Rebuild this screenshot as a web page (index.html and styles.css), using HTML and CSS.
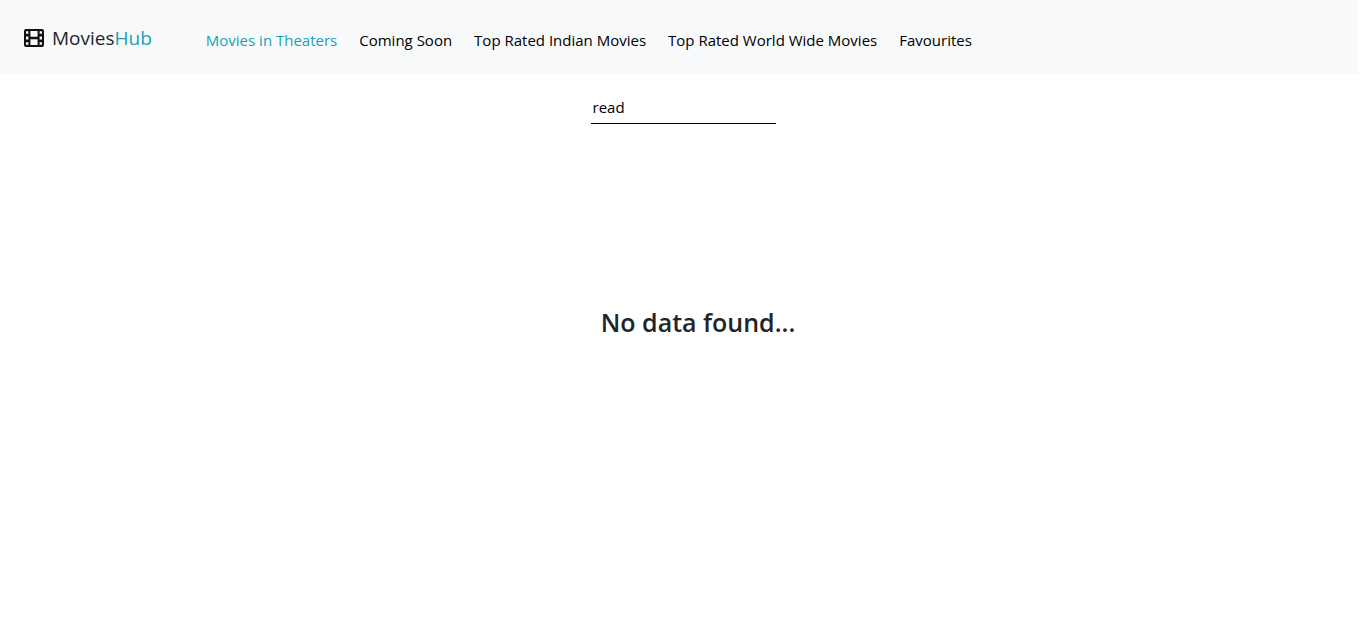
FILE: index.html
```html
<!DOCTYPE html>
<html lang="en">
<head>
<meta charset="utf-8">
<meta name="viewport" content="width=device-width, initial-scale=1">
<title>MoviesHub</title>
<link rel="stylesheet" href="styles.css">
</head>
<body>
<header class="navbar">
  <a class="brand" href="#">
    <svg class="brand-icon" viewBox="0 0 20 18" aria-hidden="true">
      <path fill="currentColor" fill-rule="evenodd" d="M2 0H18Q20 0 20 2V16Q20 18 18 18H2Q0 18 0 16V2Q0 0 2 0ZM2 2.2V4.8H4.4V2.2ZM2 7.6V10.4H4.4V7.6ZM2 13.2V15.8H4.4V13.2ZM15.6 2.2V4.8H18V2.2ZM15.6 7.6V10.4H18V7.6ZM15.6 13.2V15.8H18V13.2ZM6.4 2V7.8H13.6V2ZM6.4 10.2V16H13.6V10.2Z"/>
    </svg>
    <span class="brand-name">Movies<span class="accent">Hub</span></span>
  </a>
  <nav class="nav">
    <a class="nav-link active" href="#">Movies in Theaters</a>
    <a class="nav-link" href="#">Coming Soon</a>
    <a class="nav-link" href="#">Top Rated Indian Movies</a>
    <a class="nav-link" href="#">Top Rated World Wide Movies</a>
    <a class="nav-link" href="#">Favourites</a>
  </nav>
</header>
<main class="content">
  <input class="search" type="text" value="read" aria-label="Search movies">
  <h1 class="empty">No data found...</h1>
</main>
</body>
</html>
```
FILE: styles.css
```css
* {
  box-sizing: border-box;
}

body {
  margin: 0;
  background: #fff;
  color: #212529;
  font-family: "Segoe UI", "Open Sans", "Noto Sans", sans-serif;
  font-size: 15px;
  line-height: 24px;
}

a {
  color: #000;
  text-decoration: none;
}

.navbar {
  display: flex;
  align-items: center;
  gap: 54px;
  margin-right: 8px;
  padding: 23px 24px 20px;
  background: #f8f9fb;
}

.brand {
  display: flex;
  align-items: center;
  gap: 8px;
  color: #212529;
  font-size: 19px;
  line-height: 31px;
}

.brand-icon {
  width: 20px;
  height: 18px;
  margin-bottom: 2px;
  color: #111;
}

.accent,
.nav-link.active {
  color: #17a2b8;
}

.nav {
  display: flex;
  gap: 22px;
  padding-top: 2px;
}

.content {
  display: flex;
  flex-direction: column;
  align-items: center;
  padding-top: 20px;
}

.search {
  width: 185px;
  height: 30px;
  padding: 0 2px 4px;
  border: 0;
  border-bottom: 1px solid #000;
  outline: 0;
  background: transparent;
  color: #000;
  font: inherit;
}

.empty {
  margin: 183px 0 0;
  padding-left: 30px;
  font-size: 25px;
  font-weight: 600;
  line-height: 30px;
}
```
